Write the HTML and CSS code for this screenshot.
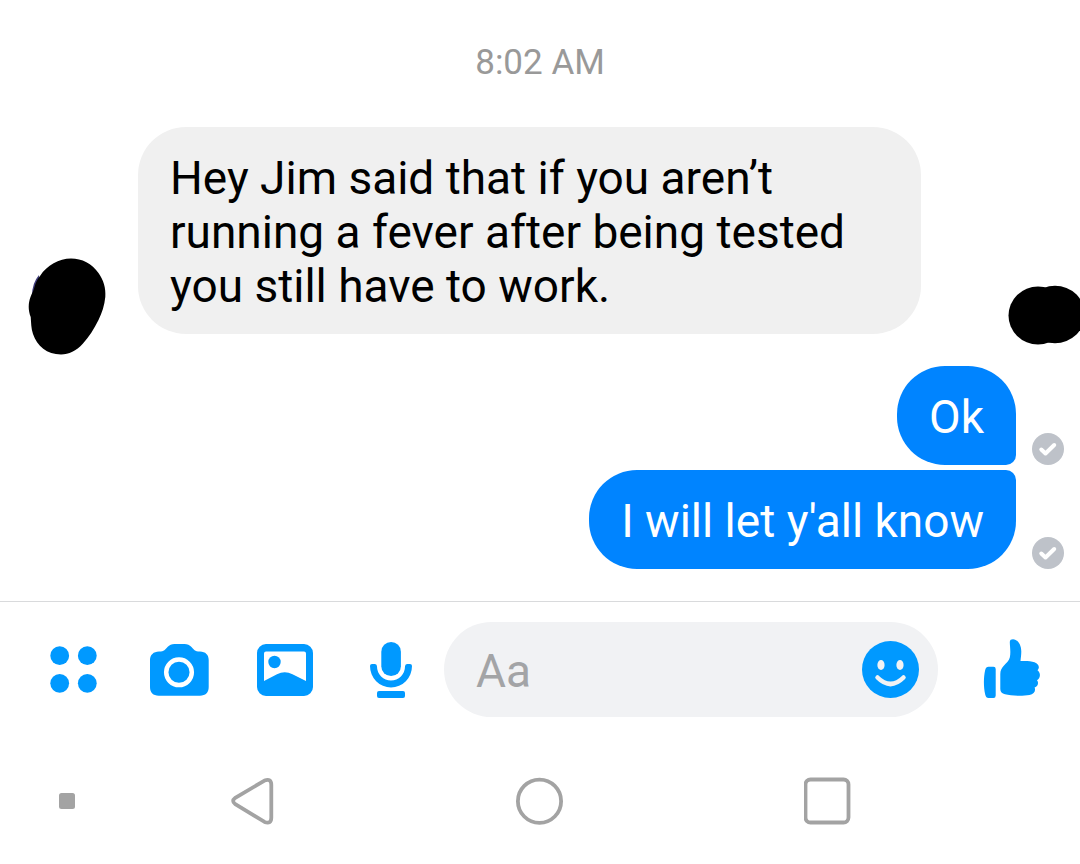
FILE: index.html
```
<!DOCTYPE html>
<html lang="en">
<head>
<meta charset="utf-8">
<meta name="viewport" content="width=device-width, initial-scale=1">
<title>Messages</title>
<link rel="stylesheet" href="styles.css">
</head>
<body>
<main class="thread">
  <time class="timestamp" datetime="08:02">8:02 AM</time>

  <div class="row row-in">
    <svg class="avatar" viewBox="0 0 78 98" aria-hidden="true">
      <path fill="#3d3a78" d="M11 17Q4 25 4 38L12 36Z"/>
      <path d="M43 0.500C54 0.500 64 5.500 70.500 15C75.500 22 78 30 77.300 39C76.500 47 74 55 70.500 62C66 71 61 79 55 85.500C48 93 41 96.500 33 96.500C19 96.500 9 88 5 76C3 70 3.200 65 2.700 59C0 52 .200 45 2.500 39C4 35 5.500 33 6.500 29C7.500 25 9 22 12 18C19 7 31 0.500 43 0.500Z"/>
    </svg>
    <p class="bubble bubble-in">Hey Jim said that if you aren’t running a fever after being tested you still have to work.</p>
    <svg class="seen" viewBox="0 0 72 60" aria-hidden="true">
      <ellipse cx="30" cy="30.500" rx="29.500" ry="29"/>
      <ellipse cx="47" cy="29.500" rx="30" ry="28.700"/>
    </svg>
  </div>

  <div class="sent">
    <div class="row row-out">
      <p class="bubble bubble-out bubble-first">Ok</p>
      <svg class="status" viewBox="0 0 32 32" role="img" aria-label="Delivered"><circle cx="16" cy="16" r="16"/><path d="M9.300 16.500L13.500 20.500L22.200 12"/></svg>
    </div>
    <div class="row row-out">
      <p class="bubble bubble-out bubble-last">I will let y'all know</p>
      <svg class="status" viewBox="0 0 32 32" role="img" aria-label="Delivered"><circle cx="16" cy="16" r="16"/><path d="M9.300 16.500L13.500 20.500L22.200 12"/></svg>
    </div>
  </div>
</main>

<form class="composer">
  <button class="tool" type="button" aria-label="More">
    <svg class="icon" viewBox="0 0 64 65"><circle cx="18.700" cy="18.700" r="9.400"/><circle cx="46.300" cy="18.700" r="9.400"/><circle cx="18.700" cy="46.300" r="9.400"/><circle cx="46.300" cy="46.300" r="9.400"/></svg>
  </button>
  <button class="tool" type="button" aria-label="Camera">
    <svg class="icon" viewBox="0 0 64 65">
      <path d="M12 14.500C17.500 14.500 18 12.500 20.500 10C22.500 8 24.500 7 27.500 7H37.500C40.500 7 42.500 8 44.500 10C47 12.500 47.500 14.500 53 14.500C58.500 14.500 61.700 18 61.700 23V50C61.700 55.500 58.500 58.700 53 58.700H11.700C6.200 58.700 3 55.500 3 50V23C3 18 6.500 14.500 12 14.500Z"/>
      <circle class="lens" cx="32" cy="35.300" r="12.800"/>
    </svg>
  </button>
  <button class="tool" type="button" aria-label="Photos">
    <svg class="icon" viewBox="0 0 64 65">
      <path fill-rule="evenodd" d="M13 7H51A9 9 0 0 1 60 16V50A9 9 0 0 1 51 59H13A9 9 0 0 1 4 50V16A9 9 0 0 1 13 7ZM13 14.500Q11 14.500 11 16.500V44L24 37.300Q31.700 33.300 39.500 37.300L53 44V16.500Q53 14.500 51 14.500Z"/>
      <circle cx="21.500" cy="25" r="6.200"/>
    </svg>
  </button>
  <button class="tool" type="button" aria-label="Voice message">
    <svg class="icon" viewBox="0 0 64 65">
      <rect x="22.300" y="5" width="19.600" height="34" rx="9.800"/>
      <path d="M11 29Q11 27 13 27H16Q18 27 18 29.500A14 14 0 0 0 46 29.500Q46 27 48 27H51Q53 27 53 29A21 21.500 0 0 1 11 29Z"/>
      <rect x="18" y="54" width="28" height="7" rx="2"/>
    </svg>
  </button>
  <div class="field">
    <input class="text" type="text" placeholder="Aa" aria-label="Message">
    <button class="emoji" type="button" aria-label="Emoji">
      <svg class="smiley" viewBox="0 0 57 57"><circle cx="28.500" cy="28.500" r="28.500"/><ellipse class="eye" cx="19" cy="24" rx="3.600" ry="5"/><ellipse class="eye" cx="38" cy="24" rx="3.600" ry="5"/><path class="mouth" d="M15.500 36.500Q28.500 49.500 41.500 36.500"/></svg>
    </button>
  </div>
  <button class="like" type="button" aria-label="Send like">
    <svg class="icon" viewBox="0 0 64 65">
      <path d="M11.500 29.700H16.500Q18.700 29.700 18.700 32V58.500Q18.700 61 16.500 61H11.500Q9 61 8.200 57.500C6.500 50 6.500 40 8.200 33Q9 29.700 11.500 29.700Z"/>
      <path d="M23.300 37C23.300 33 24.500 31.500 27 28.500C29.500 25.500 32 24 32.800 20.500C34 15 32.800 9 32.800 5C32.800 3 34.200 2.300 36 2.300C40.500 2.300 44.300 7.500 44.300 14.500C44.300 18 43.800 21 43.500 24C49 23.700 54 24 57.500 25.200C62 26.700 63 31 60.500 33.200C63.800 35.500 63.800 41 60 43.200C62 45.500 61 49.500 57.600 50.500C59 54 57 57 52.500 58C45 59.300 34 58.800 28 57.300C25 56.500 23.300 55 23.300 52Z"/>
    </svg>
  </button>
</form>

<nav class="system" aria-label="System">
  <button class="key key-dot" type="button" aria-label="Hide bar"><svg class="glyph" viewBox="0 0 48 48"><rect class="solid" x="16" y="16" width="16" height="16" rx="2.500"/></svg></button>
  <button class="key" type="button" aria-label="Back"><svg class="glyph" viewBox="0 0 48 48"><path d="M36.500 3.600L7.300 20.800Q3 24 7.300 27.200L36.500 44.900Q43.300 47.500 43.300 40.500V8Q43.300 1 36.500 3.600Z"/></svg></button>
  <button class="key" type="button" aria-label="Home"><svg class="glyph" viewBox="0 0 48 48"><circle cx="23.500" cy="24.200" r="21.600"/></svg></button>
  <button class="key" type="button" aria-label="Recent apps"><svg class="glyph" viewBox="0 0 48 48"><rect x="1.500" y="2.500" width="43" height="43" rx="5"/></svg></button>
</nav>
</body>
</html>
```
FILE: styles.css
```
* {
  box-sizing: border-box;
}

body {
  margin: 0;
  min-height: 100vh;
  display: flex;
  flex-direction: column;
  background: #fff;
  color: #000;
  font-family: Roboto, "Liberation Sans", sans-serif;
}

button {
  display: flex;
  align-items: center;
  justify-content: center;
  margin: 0;
  padding: 0;
  border: 0;
  background: none;
}

.thread {
  display: flex;
  flex-direction: column;
  padding: 42px 0 32px;
}

.timestamp {
  margin-bottom: 43px;
  color: #999;
  font-size: 35px;
  line-height: 42px;
  text-align: center;
}

.row {
  display: flex;
  align-items: flex-end;
}

.row-in {
  padding-left: 28px;
}

.avatar {
  flex: none;
  width: 78px;
  height: 98px;
  margin: 0 32px -22px 0;
}

.seen {
  flex: none;
  width: 72px;
  height: 60px;
  margin: 0 0 -11px 87px;
}

.bubble {
  margin: 0;
  padding: 24px 32px 21px;
  border-radius: 48px;
  font-size: 46px;
  line-height: 54px;
}

.bubble-in {
  flex: 1;
  background: #f0f0f0;
}

.sent {
  display: flex;
  flex-direction: column;
  gap: 5px;
  margin-top: 32px;
}

.row-out {
  justify-content: flex-end;
  gap: 16px;
  padding-right: 16px;
}

.bubble-out {
  background: #0084ff;
  color: #fff;
}

.bubble-first {
  border-bottom-right-radius: 10px;
}

.bubble-last {
  border-top-right-radius: 10px;
}

.status {
  flex: none;
  width: 32px;
  height: 32px;
  fill: #bec2c9;
}

.status path {
  fill: none;
  stroke: #fff;
  stroke-width: 4;
  stroke-linecap: round;
  stroke-linejoin: round;
}

.composer {
  display: flex;
  align-items: center;
  padding: 20px 0 20px 20px;
  border-top: 1px solid #d9dadc;
}

.tool {
  flex: none;
  width: 106px;
}

.like {
  flex: none;
  width: 142px;
}

.icon {
  width: 64px;
  height: 65px;
  fill: #0099ff;
}

.lens {
  fill: none;
  stroke: #fff;
  stroke-width: 4.5;
}

.field {
  flex: 1;
  min-width: 0;
  display: flex;
  align-items: center;
  height: 95px;
  padding: 0 19px 0 32px;
  border-radius: 48px;
  background: #f1f2f4;
}

.text {
  flex: 1;
  min-width: 0;
  padding: 3px 0 0;
  border: 0;
  outline: 0;
  background: none;
  color: #000;
  font-family: inherit;
  font-size: 46px;
  line-height: 54px;
}

.text::placeholder {
  color: #a3a4a6;
  opacity: 1;
}

.smiley {
  width: 57px;
  height: 57px;
  fill: #0099ff;
}

.eye {
  fill: #f1f2f4;
}

.mouth {
  fill: none;
  stroke: #f1f2f4;
  stroke-width: 4.5;
  stroke-linecap: round;
}

.system {
  display: grid;
  grid-template-columns: 10% 1fr 1fr 1fr 10%;
  padding: 40px 0;
}

.key-dot {
  padding-left: 26px;
}

.glyph {
  width: 48px;
  height: 48px;
  fill: none;
  stroke: #a3a3a3;
  stroke-width: 3.8;
}

.solid {
  fill: #a3a3a3;
  stroke: none;
}
```
